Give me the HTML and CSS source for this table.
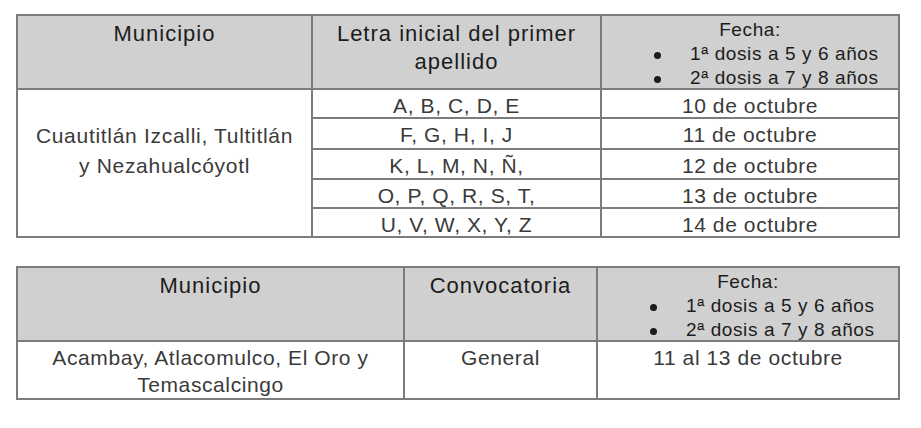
FILE: index.html
```html
<!DOCTYPE html>
<html lang="es">
<head>
<meta charset="utf-8">
<title>Calendario de vacunación</title>
<link rel="stylesheet" href="styles.css">
</head>
<body>
<main class="page">
  <table class="grid grid-one">
    <colgroup>
      <col class="c-mun1"><col class="c-letra"><col class="c-fecha1">
    </colgroup>
    <thead>
      <tr class="head-row">
        <th class="hcell">Municipio</th>
        <th class="hcell">Letra inicial del primer apellido</th>
        <th class="hcell fecha">
          <div class="fecha-title">Fecha:</div>
          <ul class="dosis">
            <li>1ª dosis a 5 y 6 años</li>
            <li>2ª dosis a 7 y 8 años</li>
          </ul>
        </th>
      </tr>
    </thead>
    <tbody>
      <tr class="r29">
        <td class="mun-cell" rowspan="5">Cuautitlán Izcalli, Tultitlán<br>y Nezahualcóyotl</td>
        <td class="cell">A, B, C, D, E</td>
        <td class="cell">10 de octubre</td>
      </tr>
      <tr class="r31">
        <td class="cell">F, G, H, I, J</td>
        <td class="cell">11 de octubre</td>
      </tr>
      <tr class="r30">
        <td class="cell">K, L, M, N, Ñ,</td>
        <td class="cell">12 de octubre</td>
      </tr>
      <tr class="r29">
        <td class="cell">O, P, Q, R, S, T,</td>
        <td class="cell">13 de octubre</td>
      </tr>
      <tr class="r29">
        <td class="cell">U, V, W, X, Y, Z</td>
        <td class="cell">14 de octubre</td>
      </tr>
    </tbody>
  </table>

  <table class="grid grid-two">
    <colgroup>
      <col class="c-mun2"><col class="c-conv"><col class="c-fecha2">
    </colgroup>
    <thead>
      <tr class="head-row">
        <th class="hcell">Municipio</th>
        <th class="hcell">Convocatoria</th>
        <th class="hcell fecha">
          <div class="fecha-title">Fecha:</div>
          <ul class="dosis">
            <li>1ª dosis a 5 y 6 años</li>
            <li>2ª dosis a 7 y 8 años</li>
          </ul>
        </th>
      </tr>
    </thead>
    <tbody>
      <tr class="r57">
        <td class="cell tall">Acambay, Atlacomulco, El Oro y<br>Temascalcingo</td>
        <td class="cell tall">General</td>
        <td class="cell tall">11 al 13 de octubre</td>
      </tr>
    </tbody>
  </table>
</main>
</body>
</html>
```

FILE: styles.css
```css
html, body {
  margin: 0;
  padding: 0;
  background: #ffffff;
}

.page {
  display: flex;
  flex-direction: column;
  gap: 28px;
  padding: 14px 0 0 16px;
  font-family: "Liberation Sans", Arial, sans-serif;
}

.grid {
  border-collapse: collapse;
  table-layout: fixed;
  width: 882px;
}

.grid th,
.grid td {
  border: 2px solid #7c7c7c;
  padding: 0;
  text-align: center;
  vertical-align: top;
}

.c-mun1 { width: 295px; }
.c-letra { width: 289px; }
.c-fecha1 { width: 298px; }

.c-mun2 { width: 387px; }
.c-conv { width: 193px; }
.c-fecha2 { width: 302px; }

.grid .head-row { height: 74px; }

.grid .hcell {
  background: #d0d0d0;
  color: #1c1c1c;
  font-weight: normal;
  font-size: 22px;
  letter-spacing: 1px;
  line-height: 28px;
  padding-top: 4px;
}

.grid .hcell.fecha {
  font-size: 19px;
  letter-spacing: 0.6px;
  line-height: 24px;
  padding-top: 2px;
}

.fecha-title {
  text-align: center;
}

.dosis {
  list-style: none;
  margin: 0 0 -3px;
  padding: 0 0 0 52px;
  text-align: left;
}

.dosis li {
  display: flex;
  align-items: center;
}

.dosis li::before {
  content: "";
  width: 7px;
  height: 7px;
  border-radius: 50%;
  background: #1c1c1c;
  margin: 2px 29px 0 0;
  flex: none;
}

.grid .cell {
  color: #3a3a3a;
  font-size: 21px;
  letter-spacing: 0.6px;
  line-height: 22px;
  padding-top: 5px;
}

.grid .cell.tall {
  line-height: 27px;
  padding-top: 2px;
}

.grid .mun-cell {
  color: #3a3a3a;
  font-size: 21px;
  letter-spacing: 0.7px;
  line-height: 30px;
  padding-top: 31px;
}

.r29 { height: 29px; }
.r30 { height: 30px; }
.r31 { height: 31px; }
.r57 { height: 57px; }
```
